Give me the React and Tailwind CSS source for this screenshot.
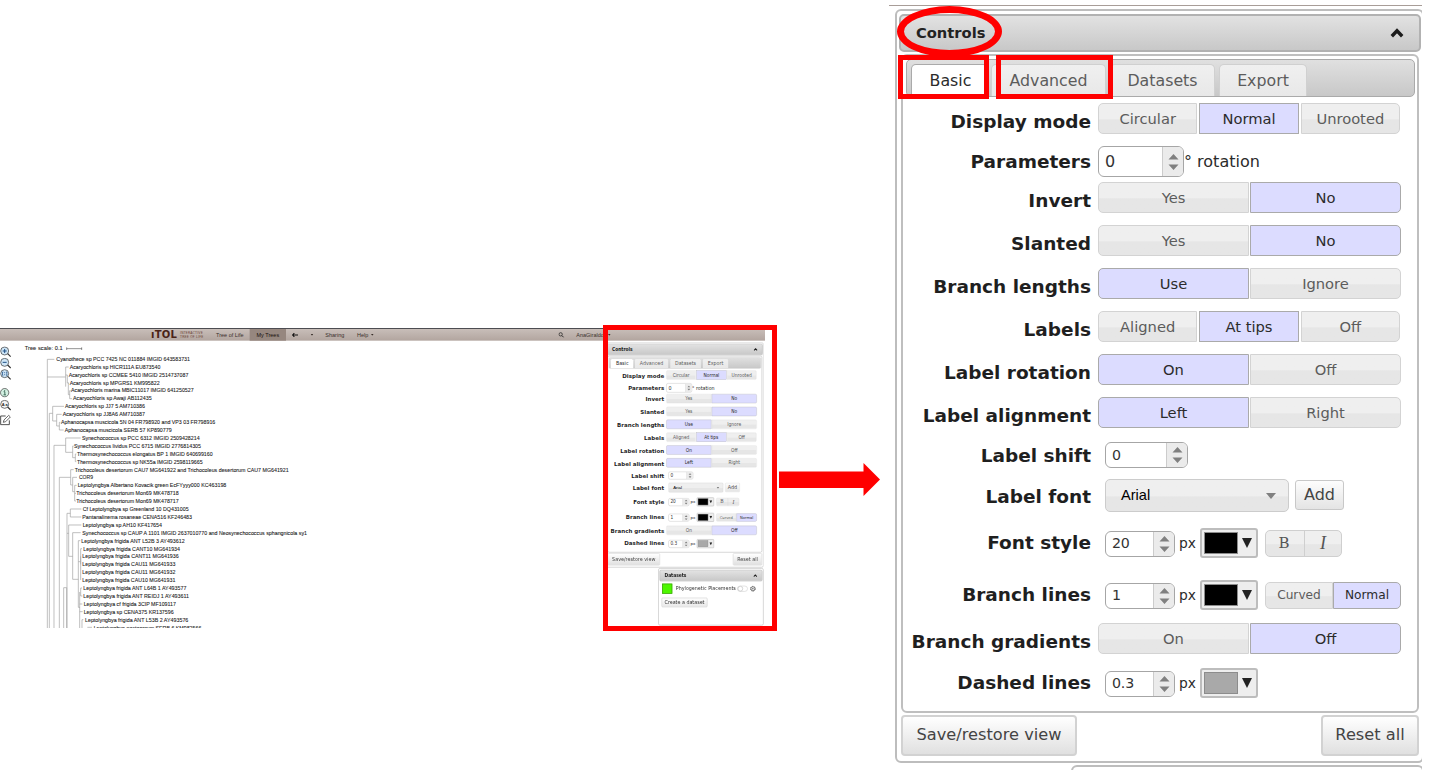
import React from "react";
import clsx from "clsx";

const RAISED = "bg-linear-to-b from-[#efefef] from-50% to-[#e6e6e6] to-55%";

function Segments({ items, active, className, textClass = "pt-px text-[14.7px]", gap = "gap-px" }) {
  return (
    <div className={clsx("flex", gap, className)}>
      {items.map((item, i) => (
        <div
          key={item}
          className={clsx(
            "flex flex-1 items-center justify-center border",
            textClass,
            i === 0 && "rounded-l-[5px]",
            i === items.length - 1 && "rounded-r-[5px]",
            i === active ? "border-[#aaaaaa] bg-[#dcdcff] text-[#2b2b2b]" : clsx("border-[#d3d3d3] text-[#5c5c5c]", RAISED)
          )}
        >
          {item}
        </div>
      ))}
    </div>
  );
}

function Spinner({ value, className, big }) {
  return (
    <div className={clsx("flex shrink-0 overflow-hidden rounded-[6px] border border-[#a6a6a6] bg-white", className)}>
      <span className={clsx("flex flex-1 items-center text-[#333]", big ? "pl-[6px] text-[16px]" : "pl-[6px] pt-px text-[14.2px] tracking-[-0.2px]")}>{value}</span>
      <span className="flex w-[21px] items-center justify-center border-l border-[#cccccc] bg-[#ebebeb]">
        <svg width="11" height="18" viewBox="0 0 11 18" className="text-[#808080]">
          <path d="M5.5 1 L10.5 6.5 H0.5 Z M5.5 17 L10.5 11.5 H0.5 Z" fill="currentColor" />
        </svg>
      </span>
    </div>
  );
}

function ColorPicker({ swatch }) {
  return (
    <div className="flex h-[30px] w-[58px] shrink-0 items-center rounded-[3px] border-2 border-[#bdbdbd] bg-[#eeeeee] pl-[2px]">
      <span className={clsx("h-[22px] w-[34px] border border-[#8c8c8c]", swatch)} />
      <svg width="10" height="10" viewBox="0 0 10 10" className="ml-[4px]">
        <path d="M0 0 H10 L5 10 Z" fill="#222" />
      </svg>
    </div>
  );
}

function Row({ label, height, leading = "leading-[37px]", indent, children }) {
  return (
    <div className={clsx("flex items-start", height)}>
      <div className={clsx("w-[188px] shrink-0 whitespace-nowrap text-right text-[18.5px] font-bold text-[#1f1f1f]", leading)}>{label}</div>
      <div className={clsx("flex shrink-0 items-center", indent ? "ml-[14px]" : "ml-[7px]")}>{children}</div>
    </div>
  );
}

function Heading({ title, className }) {
  return (
    <div
      className={clsx(
        "flex h-[38px] shrink-0 items-center justify-between rounded-[5px] border-2 border-[#b2b2b2] bg-linear-to-b from-[#e2e2e2] to-[#c8c8c8] pl-[15px] pr-[15px] text-[14.7px] font-bold text-[#222]",
        className
      )}
    >
      <span>{title}</span>
      <svg width="14" height="10" viewBox="0 0 14 10">
        <path d="M1.8 8.2 L7 2.8 L12.2 8.2" fill="none" stroke="#1c1c1c" strokeWidth="3.4" />
      </svg>
    </div>
  );
}

function Tab({ children, active, className }) {
  return (
    <div
      className={clsx(
        "flex h-[32px] items-center justify-center rounded-t-[5px] border border-b-0 text-[15.8px]",
        active ? "border-[#aaaaaa] bg-white text-[#2b2b2b]" : "border-[#d0d0d0] bg-linear-to-b from-[#f0f0f0] to-[#e8e8e8] text-[#5c5c5c]",
        className
      )}
    >
      {children}
    </div>
  );
}

const TWO = "h-[31px] w-[303px]";
const THREE = "h-[31px] w-[302px]";

function Sidebar({ children }) {
  return (
    <div className="flex w-[529px] flex-col items-end font-['DejaVu_Sans',sans-serif]">
      <div className="flex h-[754px] w-[529px] shrink-0 flex-col rounded-[6px] border-2 border-[#bdbdbd] bg-white pl-[2px] pr-px pt-[3px]">
        <Heading title="Controls" />
        <div className="mx-[2px] mt-[2px] flex h-[659px] shrink-0 flex-col rounded-[6px] border-2 border-[#bfbfbf] pt-[3px]">
          <div className="ml-[3px] mr-[2px] flex h-[38px] shrink-0 items-end rounded-[5px] border border-[#aaaaaa] bg-linear-to-b from-[#e0e0e0] to-[#c8c8c8] pl-[4px]">
            <Tab active className="w-[77px] pl-[2px]">Basic</Tab>
            <Tab className="ml-[3px] w-[115px]">Advanced</Tab>
            <Tab className="ml-[4px] w-[105px]">Datasets</Tab>
            <Tab className="ml-[4px] w-[88px]">Export</Tab>
          </div>
          <div className="flex flex-col pt-[6px]">
            <Row label="Display mode" height="h-[43px]" leading="leading-[38px]">
              <Segments items={["Circular", "Normal", "Unrooted"]} active={1} className={THREE} gap="gap-[2px]" />
            </Row>
            <Row label="Parameters" height="h-[36px]" leading="leading-[31px]">
              <Spinner value="0" big className="h-[31px] w-[86px]" />
              <span className="text-[16px] leading-[30px] text-[#2b2b2b]">° rotation</span>
            </Row>
            <Row label="Invert" height="h-[43px]">
              <Segments items={["Yes", "No"]} active={1} className={TWO} />
            </Row>
            <Row label="Slanted" height="h-[43px]">
              <Segments items={["Yes", "No"]} active={1} className={TWO} />
            </Row>
            <Row label="Branch lengths" height="h-[43px]">
              <Segments items={["Use", "Ignore"]} active={0} className={TWO} />
            </Row>
            <Row label="Labels" height="h-[43px]">
              <Segments items={["Aligned", "At tips", "Off"]} active={1} className={THREE} gap="gap-[2px]" />
            </Row>
            <Row label="Label rotation" height="h-[43px]">
              <Segments items={["On", "Off"]} active={0} className={TWO} />
            </Row>
            <Row label="Label alignment" height="h-[45px]">
              <Segments items={["Left", "Right"]} active={0} className={TWO} />
            </Row>
            <Row label="Label shift" height="h-[37px]" leading="leading-[28px]" indent>
              <Spinner value="0" className="h-[26px] w-[83px]" />
            </Row>
            <Row label="Label font" height="h-[49px]" leading="leading-[35px]" indent>
              <div className={clsx("flex h-[33px] w-[184px] items-center justify-between rounded-[5px] border border-[#cccccc] pl-[15px] pr-[12px] font-['Liberation_Sans',sans-serif] text-[14.6px] text-black", RAISED)}>
                <span>Arial</span>
                <svg width="10" height="6" viewBox="0 0 10 6">
                  <path d="M0 0 H10 L5 6 Z" fill="#808080" />
                </svg>
              </div>
              <div className="mb-px ml-[6px] flex h-[30px] w-[49px] items-center justify-center rounded-[3px] border border-[#c8c8c8] bg-linear-to-b from-[#fdfdfd] to-[#e4e4e4] pb-px text-[16px] text-[#444]">Add</div>
            </Row>
            <Row label="Font style" height="h-[52px]" leading="leading-[30px]" indent>
              <Spinner value="20" className="mt-px h-[26px] w-[70px]" />
              <span className="ml-[4px] w-[21px] text-[13.8px] text-[#2b2b2b]">px</span>
              <ColorPicker swatch="bg-black" />
              <div className={clsx("ml-[7px] flex h-[27px] w-[77px] rounded-[5px] border border-[#cfcfcf] font-['DejaVu_Serif','Liberation_Serif',serif] text-[15px] text-[#555]", RAISED)}>
                <span className="flex flex-1 items-center justify-center border-r border-[#cfcfcf] pr-[2px]">B</span>
                <span className="flex flex-1 items-center justify-center font-['Liberation_Serif',serif] text-[18px] italic">I</span>
              </div>
            </Row>
            <Row label="Branch lines" height="h-[43px]" leading="leading-[29px]" indent>
              <Spinner value="1" className="mt-px h-[26px] w-[70px]" />
              <span className="ml-[4px] w-[21px] text-[13.8px] text-[#2b2b2b]">px</span>
              <ColorPicker swatch="bg-black" />
              <Segments items={["Curved", "Normal"]} active={1} className="ml-[7px] h-[27px] w-[136px]" textClass="pt-px text-[12.2px]" gap="gap-0" />
            </Row>
            <Row label="Branch gradients" height="h-[45px]">
              <Segments items={["On", "Off"]} active={1} className={TWO} />
            </Row>
            <Row label="Dashed lines" height="h-[42px]" leading="leading-[30px]" indent>
              <Spinner value="0.3" className="mt-px h-[26px] w-[70px]" />
              <span className="ml-[4px] w-[21px] text-[13.8px] text-[#2b2b2b]">px</span>
              <ColorPicker swatch="bg-[#a9a9a9]" />
            </Row>
          </div>
        </div>
        <div className="mx-[2px] mt-[2px] flex justify-between text-[16.2px] text-[#444]">
          <div className="flex h-[41px] w-[176px] items-center justify-center rounded-[4px] border-2 border-[#d2d2d2] bg-linear-to-b from-white to-[#e0e0e0]">Save/restore view</div>
          <div className="flex h-[41px] w-[98px] items-center justify-center rounded-[4px] border-2 border-[#d2d2d2] bg-linear-to-b from-white to-[#e0e0e0]">Reset all</div>
        </div>
      </div>
      <div className="mt-[2px] flex h-[192px] w-[353px] shrink-0 flex-col rounded-[6px] border-2 border-[#bdbdbd] bg-white px-[2px] pt-[4px]">
        {children}
      </div>
    </div>
  );
}

function DatasetPanel() {
  return (
    <>
      <Heading title="Datasets" />
      <div className="mt-[8px] flex items-center pl-[9px]">
        <span className="h-[34px] w-[34px] shrink-0 border-2 border-[#3b8f10] bg-[#4df700]" />
        <span className="ml-[12px] whitespace-nowrap text-[16px] text-[#333]">Phylogenetic Placements</span>
        <span className="ml-[4px] flex h-[20px] w-[36px] shrink-0 items-center rounded-full border-2 border-[#d0d0d0] bg-white">
          <span className="h-[18px] w-[18px] rounded-full border-2 border-[#bbb] bg-white" />
        </span>
        <svg width="22" height="22" viewBox="0 0 22 22" className="ml-[6px] shrink-0">
          <circle cx="11" cy="11" r="8" fill="none" stroke="#555" strokeWidth="3" strokeDasharray="4 2.3" />
          <circle cx="11" cy="11" r="6.5" fill="none" stroke="#555" strokeWidth="2" />
          <circle cx="11" cy="11" r="2.5" fill="#555" />
        </svg>
      </div>
      <div className="ml-[7px] mt-[13px] flex h-[32px] w-[154px] items-center justify-center whitespace-nowrap rounded-[4px] border-2 border-[#cccccc] bg-linear-to-b from-white to-[#e8e8e8] text-[16px] text-[#333]">Create a dataset</div>
    </>
  );
}

// [label, start x, end x] in tree canvas units
const LEAVES = [
  ["Cyanothece sp PCC 7425 NC 011884 IMGID 643583731", 169, 570],
  ["Acaryochloris sp HICR111A EU873540", 209, 481],
  ["Acaryochloris sp CCMEE 5410 IMGID 2514737087", 206, 565],
  ["Acaryochloris sp MPGRS1 KM995822", 209, 479],
  ["Acaryochloris marina MBIC11017 IMGID 641250527", 213, 581],
  ["Acaryochloris sp Awaji AB112435", 219, 455],
  ["Acaryochloris sp JJ7 5 AM710386", 195, 435],
  ["Acaryochloris sp JJ8A6 AM710387", 188, 435],
  ["Aphanocapsa muscicola 5N 04 FR798920 and VP3 03 FR798916", 183, 646],
  ["Aphanocapsa muscicola SERB 57 KP890779", 194, 515],
  ["Synechococcus sp PCC 6312 IMGID 2509428214", 246, 599],
  ["Synechococcus lividus PCC 6715 IMGID 2776814305", 222, 603],
  ["Thermosynechococcus elongatus BP 1 IMGID 640699160", 231, 638],
  ["Thermosynechococcus sp NK55a IMGID 2598119665", 231, 608],
  ["Trichocoleus desertorum CAU7 MG641922 and Trichocoleus desertorum CAU7 MG641921", 224, 866],
  ["COR9", 237, 279],
  ["Leptolyngbya Albertano Kovacik green EcFYyyy000 KC463198", 233, 679],
  ["Trichocoleus desertorum Mon69 MK478718", 229, 536],
  ["Trichocoleus desertorum Mon69 MK478717", 229, 536],
  ["Cf Leptolyngbya sp Greenland 10 DQ431005", 248, 566],
  ["Pantanalinema rosaneae CENA516 KF246483", 247, 576],
  ["Leptolyngbya sp AH10 KF417654", 248, 486],
  ["Synechococcus sp CAUP A 1101 IMGID 2637010770 and Neosynechococcus sphangnicola sy1", 247, 921],
  ["Leptolyngbya frigida ANT L52B 3 AY493612", 244, 554],
  ["Leptolyngbya frigida CANT10 MG641934", 250, 540],
  ["Leptolyngbya frigida CANT11 MG641936", 247, 536],
  ["Leptolyngbya frigida CAU11 MG641933", 247, 526],
  ["Leptolyngbya frigida CAU11 MG641932", 247, 526],
  ["Leptolyngbya frigida CAU10 MG641931", 247, 526],
  ["Leptolyngbya frigida ANT L64B 1 AY493577", 250, 559],
  ["Leptolyngbya frigida ANT REIDJ 1 AY493611", 250, 567],
  ["Leptolyngbya cf frigida 3CIP MF109117", 251, 528],
  ["Leptolyngbya sp CENA375 KR137596", 251, 521],
  ["Leptolyngbya frigida ANT L53B 2 AY493576", 255, 565],
  ["Leptolyngbya nostocorum SERB 6 KM982566", 281, 604],
];

function Tree() {
  return (
    <svg width="960" height="862" viewBox="40 62 960 862" className="shrink-0">
      <g fill="none" stroke="#a0a0a0" strokeWidth="2">
        <path d="M163 118 H142 V930 M142 171 H197 M206 141 H197 V200 M197 165 H202 V189 H207 M205 189 V224 M205 224 H209 M212 212 H209 V236 H216" />
        <path d="M148 930 V280 H158 M192 259 H158 V303 H170 M185 283 H170 V318 H178 M181 307 H178 V330 H191" />
        <path d="M162 930 V376 H197 M242 354 H197 V397 H218 M221 378 H218 V413 H226 M229 402 H226 V425 H229" />
        <path d="M178 930 V472 H212 M221 449 H212 V495 H218 M231 472 H218 V515 H224 M230 496 H224 V543 H228 M224 520 H228" />
        <path d="M201 930 V580 H211 M244 567 H211 V591 H244 M244 615 H206 V709 H218 M201 640 H206 M242 638 H218 V778 H235" />
        <path d="M241 662 H235 V862 H240 M246 686 H242 V780 M235 725 H242 M242 709 V733 M246 804 H242 V828 H247 M239 816 V930 M239 852 H247 M239 875 H248 M250 899 H246 V930" />
        <path d="M191 930 V803 H200 V930 M262 922 H276" />
      </g>
      <g fill="none" stroke="#333" strokeWidth="1.6">
        <path d="M200 86 H245 M200 82 V90 M245 82 V90" />
      </g>
      <g className="font-['Liberation_Sans',Arial,sans-serif] text-[16px]" fill="#1a1a1a" stroke="#1a1a1a" strokeWidth="0.25">
        <text x="74" y="91" textLength="114" className="text-[17px]">Tree scale: 0.1</text>
        {LEAVES.map(([name, x0, x1], i) => (
          <text key={name} x={x0} y={122.5 + 23.72 * i} textLength={x1 - x0} lengthAdjust="spacingAndGlyphs">
            {name}
          </text>
        ))}
      </g>
    </svg>
  );
}

function Lens({ fill = "#cfe6f7", className, children }) {
  return (
    <svg width="36" height="34" viewBox="0 0 36 34" className={clsx("shrink-0", className)}>
      <circle cx="14" cy="14" r="12" fill={fill} stroke="#333" strokeWidth="2" />
      <path d="M23 22 L32 31" stroke="#333" strokeWidth="3.4" fill="none" />
      {children}
    </svg>
  );
}

function Tools() {
  return (
    <div className="flex w-[40px] shrink-0 flex-col pt-[17px]">
      <Lens><path d="M8 14 H20 M14 8 V20" stroke="#1f4f86" strokeWidth="3" /></Lens>
      <Lens><path d="M8 14 H20" stroke="#1f4f86" strokeWidth="3" /></Lens>
      <Lens>
        <path d="M10 9 H7.500 V19 H10 M18 9 H20.500 V19 H18 M14 9.500 V12.500 M14 15.500 V18.500" stroke="#1f4f86" strokeWidth="2.2" fill="none" />
      </Lens>
      <svg width="36" height="30" viewBox="0 0 36 30" className="mt-[22px] shrink-0">
        <circle cx="14" cy="15" r="12.500" fill="#d3f0e2" stroke="#333" strokeWidth="2" />
        <path d="M11 12 H14.500 V21 M10.500 21.500 H18 M14 7 V9.500" stroke="#2a5a48" strokeWidth="2.6" fill="none" />
      </svg>
      <Lens fill="#f4f4f4" className="mt-[6px]">
        <text x="5" y="18.500" fontSize="12" fontWeight="bold" fill="#222" textLength="18" className="font-['Liberation_Sans',sans-serif]">Aa</text>
      </Lens>
      <svg width="34" height="34" viewBox="0 0 34 34" className="mt-[10px] shrink-0">
        <path d="M17 5 H2 V31 H28 V18" fill="none" stroke="#333" strokeWidth="2.6" />
        <path d="M10 24 L12 17 L26 3 L31 8 L17 22 Z" fill="#fff" stroke="#333" strokeWidth="2.2" />
      </svg>
    </div>
  );
}

function Caret({ className }) {
  return (
    <svg width="8" height="5" viewBox="0 0 8 5" className={clsx("shrink-0", className)}>
      <path d="M0 0 H8 L4 5 Z" fill="#3a302c" />
    </svg>
  );
}

function NavBar() {
  return (
    <div className="flex h-[38px] w-full shrink-0 items-center whitespace-nowrap border-t-[3px] border-[#4d4d52] bg-linear-to-b from-[#c8beb9] to-[#b2a59f] pl-[453px] font-['Liberation_Sans',sans-serif] text-[16.500px] text-[#3a302c]">
      <span className="w-[87px] font-['DejaVu_Sans',sans-serif] text-[30px] font-bold leading-none tracking-[0.8px] text-[#4a2418]">ıTOL</span>
      <span className="w-[108px] font-['DejaVu_Sans',sans-serif] text-[9.500px] leading-[11px] tracking-[0.6px] text-[#6e4437]">
        INTERACTIVE
        <br />
        TREE OF LIFE
      </span>
      <span className="w-[101px]">Tree of Life</span>
      <span className="flex h-full w-[109px] items-center justify-center bg-[#96877f] text-[#16100d]">My Trees</span>
      <svg width="18" height="14" viewBox="0 0 18 14" className="ml-[18px]">
        <path d="M7 1 L2 7 L7 13 M2 7 H18" fill="none" stroke="#111" strokeWidth="3.4" />
      </svg>
      <Caret className="ml-[38px]" />
      <span className="ml-[36px] w-[95px]">Sharing</span>
      <span>Help</span>
      <Caret className="ml-[8px]" />
      <svg width="18" height="18" viewBox="0 0 18 18" className="ml-[554px]">
        <circle cx="7" cy="7" r="5" fill="none" stroke="#222" strokeWidth="2.200" />
        <path d="M11 11 L16 16" stroke="#222" strokeWidth="2.800" />
      </svg>
      <span className="ml-[36px]">AnaGiraldo</span>
      <Caret className="ml-[12px]" />
    </div>
  );
}

function AppWindow() {
  return (
    <div className="h-[300px] w-[766px] shrink-0 overflow-hidden">
      <div className="flex h-[900px] w-[2295px] origin-top-left scale-[0.33333] flex-col bg-white">
        <NavBar />
        <div className="flex min-h-0 flex-1">
          <Tools />
          <Tree />
          <div className="ml-[817px] mt-[5px] h-[850px] w-[475px] shrink-0">
            <div className="origin-top-left scale-[0.896]">
              <Sidebar>
                <DatasetPanel />
              </Sidebar>
            </div>
          </div>
        </div>
      </div>
    </div>
  );
}

export default function App() {
  return (
    <div className="relative flex h-[770px] w-[1430px] overflow-hidden bg-white">
      <div className="mt-[328px]">
        <AppWindow />
      </div>
      <svg width="102" height="34" viewBox="0 0 102 34" className="ml-[13px] mt-[463px] shrink-0">
        <path d="M0 8.500 H84.500 V0 L101 16.500 L84.500 33 V25 H0 Z" fill="#ff0000" />
      </svg>
      <div className="ml-[8px] mt-[5px] h-[765px] w-[533px] shrink-0 overflow-hidden border-t border-[#a89d98] pl-[6px] pt-[3px]">
        <Sidebar />
      </div>
      <div className="absolute left-[603px] top-[325px] h-[306px] w-[174px] border-[5px] border-[#ff0000]" />
      <div className="absolute left-[897px] top-[6px] h-[51px] w-[105px] rounded-[50%] border-[7px] border-[#ff0000]" />
      <div className="absolute left-[898px] top-[55px] h-[44px] w-[91px] border-[5px] border-[#ff0000]" />
      <div className="absolute left-[996px] top-[55px] h-[44px] w-[117px] border-[5px] border-[#ff0000]" />
    </div>
  );
}
